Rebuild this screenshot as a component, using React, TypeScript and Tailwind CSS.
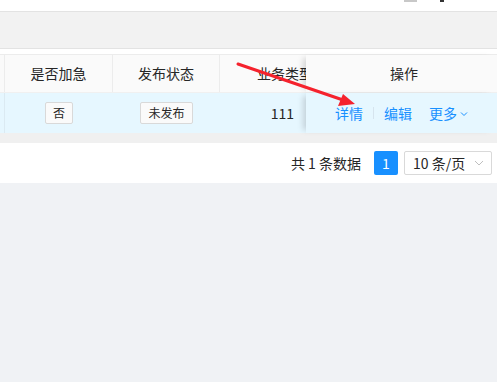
import React from "react";

export default function App() {
  const font = { fontFamily: '"Noto Sans CJK SC", "Noto Sans", sans-serif' };
  return (
    <div className="relative w-[497px] h-[382px] overflow-hidden bg-[#f0f2f5] text-[14px] text-[#262626]" style={font}>
      {/* top white bar */}
      <div className="h-[11px] bg-white flex items-start">
        <div className="ml-[404px] w-[13px] h-[2px] bg-[#c8c8c8]" />
        <div className="ml-[23px] w-[4px] h-[2px] bg-[#333]" />
      </div>
      <div className="h-[38px] bg-[#f2f2f2] border-y border-[#e3e3e3]" />
      {/* content white */}
      <div className="bg-white pt-[5px]">
        <div className="border-t border-[#ececec]">
          {/* header */}
          <div className="flex h-[38px] bg-[#fafafa] border-b border-[#f0f0f0]">
            <div className="w-[5px] border-r border-[#ececec]" />
            <div className="w-[108px] border-r border-[#ececec] flex items-center justify-center">是否加急</div>
            <div className="w-[107px] border-r border-[#ececec] flex items-center justify-center">发布状态</div>
            <div className="w-[86px] flex items-center pl-[37px] whitespace-nowrap">业务类型</div>
            <div className="relative flex-1 flex items-center justify-center pl-[5px] bg-[#fafafa] shadow-[-6px_0_6px_-3px_rgba(0,0,0,0.15)] z-10">操作</div>
          </div>
          {/* row */}
          <div className="flex h-[40px] bg-[#e6f7ff]">
            <div className="w-[5px] border-r border-[#dbeaf2]" />
            <div className="w-[108px] flex items-center justify-center">
              <span className="h-[22px] px-[7px] flex items-center text-[12px] border border-[#d9d9d9] bg-[#fafafa] rounded-[2px]">否</span>
            </div>
            <div className="w-[107px] flex items-center justify-center">
              <span className="h-[22px] px-[7px] flex items-center text-[12px] border border-[#d9d9d9] bg-[#fafafa] rounded-[2px]">未发布</span>
            </div>
            <div className="w-[86px] flex items-center justify-end pr-[12px]">111</div>
            <div className="relative flex-1 flex items-center pl-[29px] bg-[#e6f7ff] shadow-[-6px_0_6px_-3px_rgba(0,0,0,0.15)] z-10 text-[#1890ff]">
              <span>详情</span>
              <span className="mx-[10px] w-px h-[12px] bg-[#d6e4ee]" />
              <span>编辑</span>
              <span className="ml-[17px]">更多</span>
              <svg className="ml-[3px] mt-[2px]" width="8" height="6" viewBox="0 0 8 6" fill="none">
                <path d="M1 1.5 L4 4.5 L7 1.5" stroke="#1890ff" strokeWidth="1" />
              </svg>
            </div>
          </div>
        </div>
        <div className="h-[10px] bg-[#f0f0f0]" />
        {/* pagination */}
        <div className="h-[40px] flex items-center justify-end pr-[5px]">
          <span>共 1 条数据</span>
          <span className="ml-[13px] w-[24px] h-[24px] rounded-[2px] bg-[#1890ff] text-white flex items-center justify-center">1</span>
          <div className="ml-[6px] w-[88px] h-[24px] border border-[#d9d9d9] rounded-[2px] flex items-center pl-[8px] pr-[7px]">
            <span className="flex-1">10 条/页</span>
            <svg width="10" height="6" viewBox="0 0 10 6" fill="none">
              <path d="M1 1 L5 5 L9 1" stroke="#bfbfbf" strokeWidth="1" />
            </svg>
          </div>
        </div>
      </div>
      {/* red arrow annotation */}
      <svg className="absolute left-0 top-0 z-20" width="497" height="382" viewBox="0 0 497 382">
        <line x1="238" y1="64" x2="343" y2="100" stroke="#f5222d" strokeWidth="3" strokeLinecap="round" />
        <polygon points="355,104 338,106 343,94" fill="#f5222d" />
      </svg>
    </div>
  );
}
